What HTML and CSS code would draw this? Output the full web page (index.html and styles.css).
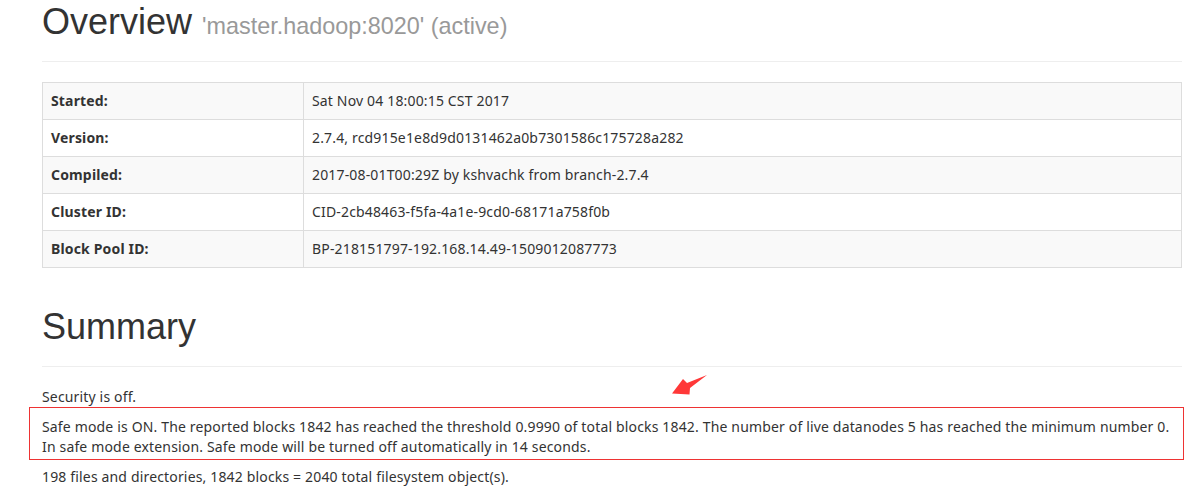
FILE: index.html
```html
<!DOCTYPE html>
<html>
<head>
<meta charset="utf-8">
<title>Namenode information</title>
<link rel="stylesheet" href="styles.css">
</head>
<body>
<div class="container">
  <div class="page-header first">
    <h1>Overview <small>'master.hadoop:8020' (active)</small></h1>
  </div>
  <table class="info">
    <tr><th>Started:</th><td>Sat Nov 04 18:00:15 CST 2017</td></tr>
    <tr><th>Version:</th><td>2.7.4, rcd915e1e8d9d0131462a0b7301586c175728a282</td></tr>
    <tr><th>Compiled:</th><td>2017-08-01T00:29Z by kshvachk from branch-2.7.4</td></tr>
    <tr><th>Cluster ID:</th><td>CID-2cb48463-f5fa-4a1e-9cd0-68171a758f0b</td></tr>
    <tr><th>Block Pool ID:</th><td>BP-218151797-192.168.14.49-1509012087773</td></tr>
  </table>
  <div class="page-header second">
    <h1>Summary</h1>
  </div>
  <p>Security is off.</p>
  <div class="highlight">
    <svg class="arrow" width="40" height="24" viewBox="0 0 40 24"><polygon points="2,20.5 13,6 17,10 37,2 20,15 19.5,21.5" fill="#ff3838"/></svg>
    <p>Safe mode is ON. The reported blocks 1842 has reached the threshold 0.9990 of total blocks 1842. The number of live datanodes 5 has reached the minimum number 0.<br>In safe mode extension. Safe mode will be turned off automatically in 14 seconds.</p>
  </div>
  <p>198 files and directories, 1842 blocks = 2040 total filesystem object(s).</p>
</div>
</body>
</html>
```

FILE: styles.css
```css
html, body {
  margin: 0;
  padding: 0;
  background: #fff;
}

body {
  font-family: "Noto Sans", "Open Sans", sans-serif;
  font-size: 14px;
  line-height: 20px;
  letter-spacing: 0.16px;
  color: #333;
}

.container {
  width: 1140px;
  padding-left: 42px;
}

.page-header {
  border-bottom: 1px solid #eee;
}

.page-header.first {
  padding-top: 2px;
  padding-bottom: 19px;
  margin-bottom: 20px;
}

.page-header.second {
  margin-top: 39px;
  padding-bottom: 19px;
  margin-bottom: 20px;
}

h1 {
  margin: 0;
  font-family: "Liberation Sans", Arial, sans-serif;
  font-size: 36px;
  font-weight: 500;
  line-height: 40px;
  letter-spacing: 0;
  color: #333;
}

h1 small {
  font-size: 23.4px;
  font-weight: normal;
  line-height: 0;
  color: #999;
}

.info {
  width: 100%;
  border-collapse: collapse;
  border: 1px solid #ddd;
  margin-bottom: 0;
}

.info th,
.info td {
  border: 1px solid #ddd;
  padding: 8px;
  line-height: 20px;
  text-align: left;
  vertical-align: top;
}

.info th {
  width: 244px;
  font-weight: bold;
}

.info tr:nth-child(odd) {
  background: #f9f9f9;
}

p {
  margin: 0 0 10px;
}

.highlight {
  position: relative;
}

.highlight::before {
  content: "";
  position: absolute;
  top: -10px;
  bottom: -3px;
  left: -13px;
  right: -2px;
  border: 1px solid #ee3333;
  pointer-events: none;
}

.arrow {
  position: absolute;
  left: 628px;
  top: -44px;
}
```
